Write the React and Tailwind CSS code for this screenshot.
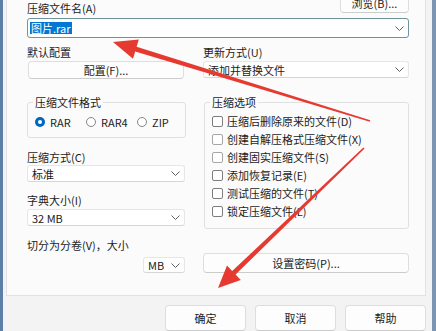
import React from "react";

const Chevron = () => (
  <svg width="9" height="5" viewBox="0 0 9 5" className="shrink-0">
    <path d="M0.5 0.5 L4.5 4.5 L8.5 0.5" fill="none" stroke="#5f5f5f" strokeWidth="1" />
  </svg>
);

const Combo = ({ children, className = "" }) => (
  <div
    className={
      "flex items-center justify-between bg-white border border-[#e6e6e6] border-b-[#d6d6d6] rounded-[3px] pl-[4px] pr-[4px] " +
      className
    }
  >
    <span className="truncate">{children}</span>
    <Chevron />
  </div>
);

const Btn = ({ children, className = "" }) => (
  <div
    className={
      "flex items-center justify-center bg-[#fdfdfd] border border-[#dedede] border-b-[#cccccc] rounded-[4px] " +
      className
    }
  >
    {children}
  </div>
);

const Radio = ({ checked, label, className = "" }) => (
  <div className={"flex items-center gap-[5px] " + className}>
    {checked ? (
      <div className="w-[10px] h-[10px] rounded-full bg-[#0067c0] flex items-center justify-center">
        <div className="w-[4px] h-[4px] rounded-full bg-white" />
      </div>
    ) : (
      <div className="w-[10px] h-[10px] rounded-full border border-[#858585] bg-white" />
    )}
    <span>{label}</span>
  </div>
);

const Check = ({ label, light }) => (
  <div className="flex items-center h-[18px] gap-[4px]">
    <div
      className={
        "w-[11px] h-[11px] rounded-[2px] border bg-white " +
        (light ? "border-[#a6a6a6]" : "border-[#7d7d7d]")
      }
    />
    <span>{label}</span>
  </div>
);

export default function App() {
  return (
    <div className="relative w-[436px] h-[331px] overflow-hidden flex bg-[#f3f3f3] text-[11px] leading-[14px] text-[#1b1b1b] font-[family-name:'Noto_Sans_CJK_SC',sans-serif]">
      <div className="w-[3px] shrink-0 bg-[#5b7fa6]" />
      <div className="w-[429px] shrink-0 flex flex-col">
        {/* tab page */}
        <div className="ml-[3px] w-[420px] h-[298px] bg-[#fbfbfb] border-x border-b border-[#e2e2e2] pl-[20px] pr-[16px] flex flex-col">
          <div className="-mt-[7px] h-[20px] flex justify-between items-start">
            <span className="mt-[8px]">压缩文件名(A)</span>
            <Btn className="w-[69px] h-[20px]">浏览(B)...</Btn>
          </div>
          <div className="mt-[5px] h-[20px] flex items-center justify-between bg-white border border-[#6e949c] rounded-[3px] pl-[2px] pr-[4px]">
            <span className="bg-[#0078d4] text-white px-[1px] h-[12px] leading-[12px]">图片.rar</span>
            <Chevron />
          </div>

          <div className="mt-[7px] flex justify-between">
            <div className="w-[159px] flex flex-col">
              <span className="h-[14px]">默认配置</span>
              <Btn className="mt-[2px] ml-[1px] w-[156px] h-[18px]">配置(F)...</Btn>
            </div>
            <div className="w-[206px] flex flex-col">
              <span className="h-[14px]">更新方式(U)</span>
              <Combo className="mt-[2px] h-[17px] pl-[2px]">添加并替换文件</Combo>
            </div>
          </div>

          <div className="mt-[16px] flex justify-between items-start">
            <div className="w-[159px] flex flex-col">
              <fieldset className="border border-[#e0e0e0] rounded-[3px] pb-[8px]">
                <legend className="ml-[5px] px-[2px] h-[14px]">压缩文件格式</legend>
                <div className="mt-[6px] pl-[7px] flex items-center h-[14px]">
                  <Radio checked label="RAR" className="w-[51px]" />
                  <Radio label="RAR4" className="w-[51px]" />
                  <Radio label="ZIP" />
                </div>
              </fieldset>
              <span className="mt-[12px] h-[14px]">压缩方式(C)</span>
              <Combo className="mt-[1px] w-[158px] h-[17px]">标准</Combo>
              <span className="mt-[11px] h-[14px]">字典大小(I)</span>
              <Combo className="mt-[2px] w-[158px] h-[17px]">32 MB</Combo>
              <span className="mt-[12px] h-[14px]">切分为分卷(V)，大小</span>
              <Combo className="mt-[5px] ml-auto mr-[1px] w-[42px] h-[16px]">MB</Combo>
            </div>
            <div className="w-[205px] flex flex-col">
              <fieldset className="border border-[#e0e0e0] rounded-[3px] pb-[8px] pl-[7px]">
                <legend className="ml-[-2px] px-[2px] h-[14px]">压缩选项</legend>
                <div className="mt-[3px] flex flex-col">
                  <Check label="压缩后删除原来的文件(D)" />
                  <Check label="创建自解压格式压缩文件(X)" light />
                  <Check label="创建固实压缩文件(S)" light />
                  <Check label="添加恢复记录(E)" />
                  <Check label="测试压缩的文件(T)" />
                  <Check label="锁定压缩文件(L)" />
                </div>
              </fieldset>
              <Btn className="mt-[24px] -ml-[1px] w-[206px] h-[20px]">设置密码(P)...</Btn>
            </div>
          </div>
        </div>

        {/* footer */}
        <div className="mt-[9px] pr-[6px] flex justify-end gap-[9px]">
          <Btn className="w-[81px] h-[26px] border-[#55838e] border-b-[#55838e]">确定</Btn>
          <Btn className="w-[81px] h-[26px]">取消</Btn>
          <Btn className="w-[81px] h-[26px]">帮助</Btn>
        </div>
      </div>
      <div className="w-[4px] shrink-0 bg-[#7b95b2]" />

      {/* annotation arrows */}
      <svg
        className="absolute left-0 top-0 pointer-events-none"
        width="436"
        height="331"
        viewBox="0 0 436 331"
      >
        <polygon
          fill="#e63a31"
          points="370.2,120.2 136.6,46.7 138.8,39.5 113,42 133.0,58.7 135.2,51.5 369.8,121.8"
        />
        <polygon
          fill="#e63a31"
          points="363.4,147.4 232.2,271.0 227.0,265.6 218,288 240.8,280.0 235.6,274.6 364.6,148.6"
        />
      </svg>
    </div>
  );
}
